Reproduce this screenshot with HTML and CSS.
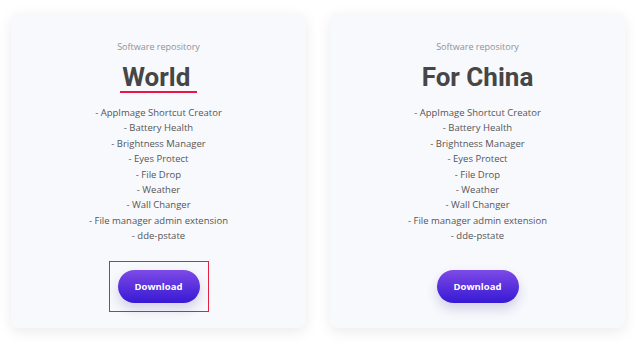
FILE: index.html
```html
<!DOCTYPE html>
<html>
<head>
    <title>Software repository</title>
    <link rel="stylesheet" href="styles.css">
</head>
<body>

<div class="repo-grid">
    <div class="repo-card">
        <div class="repo-label">Software repository</div>
        <h2 class="repo-title"><span class="underlined">World&nbsp;</span></h2>
        <ul class="repo-list">
            <li>- AppImage Shortcut Creator</li>
            <li>- Battery Health</li>
            <li>- Brightness Manager</li>
            <li>- Eyes Protect</li>
            <li>- File Drop</li>
            <li>- Weather</li>
            <li>- Wall Changer</li>
            <li>- File manager admin extension</li>
            <li>- dde-pstate</li>
        </ul>
        <div class="btn-frame marked">
            <a class="download-btn" href="#">Download</a>
        </div>
    </div>
    <div class="repo-card">
        <div class="repo-label">Software repository</div>
        <h2 class="repo-title">For China</h2>
        <ul class="repo-list">
            <li>- AppImage Shortcut Creator</li>
            <li>- Battery Health</li>
            <li>- Brightness Manager</li>
            <li>- Eyes Protect</li>
            <li>- File Drop</li>
            <li>- Weather</li>
            <li>- Wall Changer</li>
            <li>- File manager admin extension</li>
            <li>- dde-pstate</li>
        </ul>
        <div class="btn-frame">
            <a class="download-btn" href="#">Download</a>
        </div>
    </div>
</div>

</body>
</html>
```

FILE: styles.css
```css
body {
    font-family: 'Open Sans', sans-serif;
    background-color: #fff;
    margin: 0;
    padding: 0;
}

.repo-grid {
    display: grid;
    grid-template-columns: 295px 295px;
    column-gap: 24px;
    padding: 13px 13px 16px 11px;
}

.repo-card {
    height: 315px;
    background-color: #f8f9fd;
    border-radius: 7px;
    box-shadow: 0 4px 14px rgba(0, 0, 0, 0.08);
    text-align: center;
    display: flex;
    flex-direction: column;
    align-items: center;
    padding-top: 27px;
    box-sizing: border-box;
}

.repo-label {
    font-size: 9px;
    color: #8f9198;
    line-height: 14px;
}

.repo-title {
    font-family: 'Roboto', sans-serif;
    font-weight: 700;
    font-size: 26px;
    color: #464646;
    margin: 7px 0 0;
    line-height: 32px;
}

.underlined {
    display: inline-block;
    border-bottom: 2px solid #ee1546;
    line-height: 27px;
    padding-left: 2px;
}

.repo-list {
    list-style: none;
    margin: 12px 0 0;
    padding: 0;
    font-size: 9.5px;
    color: #555;
}

.repo-list li {
    line-height: 15.4px;
}

.btn-frame {
    margin-top: 17px;
    padding: 8px 8px;
    border: 1px solid transparent;
}

.btn-frame.marked {
    border-color: #e8203f;
}

.download-btn {
    display: block;
    width: 82px;
    height: 33px;
    line-height: 33px;
    border-radius: 17px;
    background: linear-gradient(#7d4ae6, #3719d4);
    color: #fff;
    font-size: 9.5px;
    font-weight: 700;
    text-decoration: none;
    box-shadow: 0 6px 12px rgba(40, 30, 120, 0.18);
}
```
